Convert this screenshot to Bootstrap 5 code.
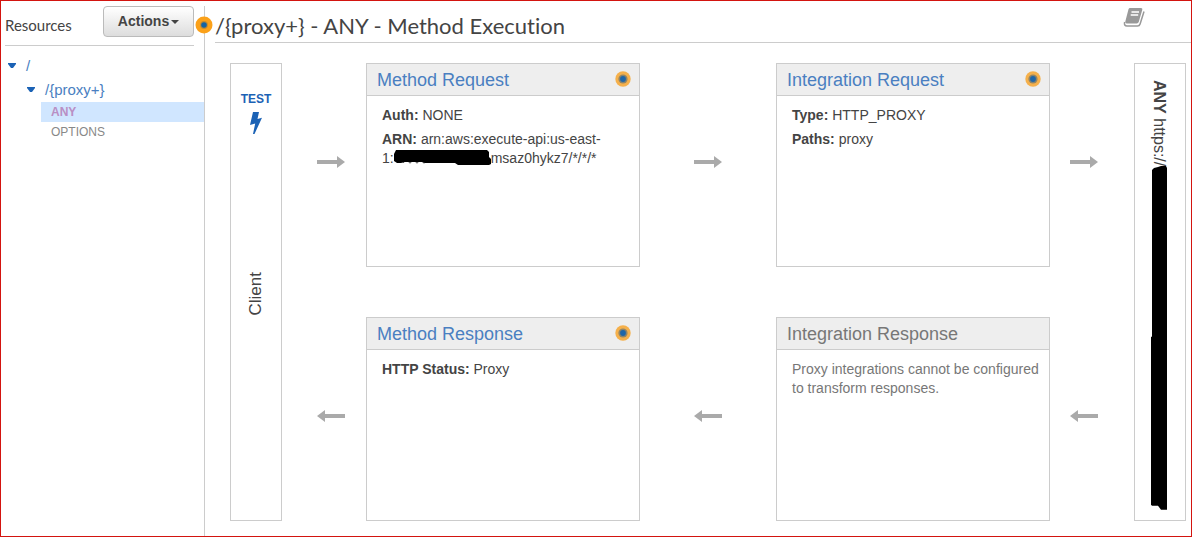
<!DOCTYPE html>
<html lang="en">
<head>
<meta charset="utf-8">
<meta name="viewport" content="width=device-width, initial-scale=1">
<title>Method Execution</title>
<link href="https://cdn.jsdelivr.net/npm/bootstrap@5.3.0/dist/css/bootstrap.min.css" rel="stylesheet">
<style>
  body { font-family: "Liberation Sans", Arial, sans-serif; font-size: 14px; line-height: 19px; color: #444; }
  a { text-decoration: none; color: #4a7fc1; }
  .app-frame { border: 1px solid #d3140f; }
  .resource-pane { width: 204px; flex: none; margin-top: 5px; border-right: 1px solid #ccc; padding-left: 4px; }
  .pane-head { height: 40px; margin-right: 10px; border-bottom: 1px solid #ccc; }
  .pane-title { font: 15px/20px Lato, sans-serif; margin: 9px 0 0; }
  .btn-actions { --bs-btn-padding-x: 14px; --bs-btn-padding-y: 5px; --bs-btn-font-size: 14px; --bs-btn-line-height: 19px;
    --bs-btn-border-radius: 4px; --bs-btn-font-weight: 700; --bs-btn-color: #444; --bs-btn-border-color: #bbb;
    height: 31px; width: 91px; padding-inline: 0; background: linear-gradient(#fff, #ddd); }
  .btn-actions::after { margin-left: 2px; vertical-align: 2px; border-width: 4px 4px 0; }
  .tree-link { font-size: 15px; line-height: 24px; }
  .tree-root { margin: 8px 0 0 2px; }
  .tree-child { margin-left: 21px; }
  .tree-child svg, .tree-root svg { width: 10px; height: 6px; margin-right: 9px; }
  .tree-method { display: block; margin-left: 36px; padding-left: 10px; font-size: 12px; line-height: 20px; color: #888; }
  .tree-method.chosen { background: #d0e6ff; color: #b98fc4; font-weight: 700; }
  .work-pane { padding-left: 10px; }
  .work-head { height: 42px; border-bottom: 1px solid #ccc; }
  .work-title { font: 22px/28px Lato, sans-serif; font-variant-ligatures: none; margin: 11px 0 0; }
  .help-button { margin: 6px 46px 0 0; }
  .flow-grid { display: grid; grid-template-columns: 52px 84fr 274fr 136fr 274fr 84fr 52px;
    grid-template-rows: 204px 204px; row-gap: 50px; padding: 20px 5px 15px 15px; }
  .end-box { grid-row: 1 / 3; border: 1px solid #ccc; }
  .client-box { grid-column: 1; padding-top: 26px; }
  .client-box a { font-size: 12px; font-weight: 700; color: #1b62b5; }
  .client-box svg { margin-top: 2px; }
  .upright { writing-mode: vertical-rl; font-size: 16px; line-height: 20px; white-space: nowrap; }
  .client-name { transform: rotate(180deg); font-size: 17px; line-height: 16px; margin-top: 137px; }
  .backend-box { grid-column: 7; padding: 16px 2px 10px 0; }
  .flow-card { --bs-card-border-radius: 0; --bs-card-inner-border-radius: 0; --bs-card-border-color: #ccc; color: #444; }
  .flow-card .card-header { height: 32px; padding: 0 8px 0 10px; background: #eee; border-color: #ccc; }
  .flow-card h2 { font-size: 18px; line-height: 32px; font-weight: 400; margin: 0; }
  .flow-card .card-header svg { margin-top: 7px; }
  .flow-card .card-body { padding: 10px 8px 0 15px; }
  .flow-card p { margin-bottom: 5px; }
  .muted-card, .muted-card h2 { color: #777; }
  .flow-arrow { width: 28px; height: 14px; fill: #aaa; margin-bottom: 6px; }
  .near-card { padding-left: 14px; }
  .near-end { padding-right: 16px; }
  .head-dot { position: absolute; left: -10px; top: 15px; }
</style>
</head>
<body>
<svg class="d-none">
  <symbol id="dot" viewBox="0 0 16 16"><circle cx="8" cy="8" r="7.7" fill="#f5b04b"/><circle cx="8" cy="8" r="4.6" fill="#8f8468"/><circle cx="8" cy="8" r="2.9" fill="#1f66a8"/></symbol>
  <symbol id="right" viewBox="0 0 28 14"><path d="M0 5h20V1l8 6-8 6V9H0z"/></symbol>
  <symbol id="left" viewBox="0 0 28 14"><path d="M28 5H8V1L0 7l8 6V9h20z"/></symbol>
  <symbol id="caret" viewBox="0 0 10 6"><path fill="#1b62b5" d="M1 0h8v1L6 5H4L1 1z"/></symbol>
</svg>
<div class="app-frame d-flex min-vh-100">
  <aside class="resource-pane">
    <div class="pane-head d-flex justify-content-between align-items-start">
      <h2 class="pane-title">Resources</h2>
      <button type="button" class="btn btn-actions dropdown-toggle">Actions</button>
    </div>
    <nav>
      <div class="tree-root d-flex align-items-center"><svg><use href="#caret"/></svg><a class="tree-link" href="#">/</a></div>
      <div class="tree-child d-flex align-items-center"><svg><use href="#caret"/></svg><a class="tree-link" href="#">/{proxy+}</a></div>
      <a class="tree-method chosen" href="#">ANY</a>
      <a class="tree-method" href="#">OPTIONS</a>
    </nav>
  </aside>
  <main class="work-pane flex-grow-1 position-relative">
    <svg class="head-dot" width="18" height="18" viewBox="0 0 18 18"><circle cx="9" cy="9" r="8.5" fill="#fba119"/><circle cx="9" cy="9" r="3.9" fill="#c18a32"/><circle cx="9" cy="9" r="2.8" fill="#1263a5"/></svg>
    <header class="work-head d-flex justify-content-between align-items-start">
      <h1 class="work-title">/{proxy+} - ANY - Method Execution</h1>
      <button type="button" class="help-button btn p-0 border-0 d-flex" aria-label="Documentation">
        <svg width="22" height="21" viewBox="0 0 22 21"><path fill="#999" d="M7 1h11q1.800 0 1.300 1.800l-3.500 12q-.4 1.700-2.200 1.700H3.800q-2 0-1.500-2L5.500 2.300Q6 1 7 1z"/><path fill="none" stroke="#fff" stroke-width="1.300" d="M8.500 5h7.500M7.700 8h7.500"/><path fill="none" stroke="#999" stroke-width="1.500" d="M1.600 15q-.8 4 2.400 4h10.500q2 0 2.600-2L21 4.500"/></svg>
      </button>
    </header>
    <div class="flow-grid">
      <section class="end-box client-box d-flex flex-column align-items-center">
        <a href="#" class="d-flex flex-column align-items-center">TEST
          <svg width="14" height="24" viewBox="0 0 14 24" fill="#1b62b5"><path d="M4 1h6L8.500 8 13 6.800 5.500 23 4 23l2.200-10.500L1 14z"/></svg>
        </a>
        <span class="upright client-name">Client</span>
      </section>
      <div class="near-card d-flex align-items-center justify-content-center"><svg class="flow-arrow"><use href="#right"/></svg></div>
      <article class="card flow-card">
        <div class="card-header d-flex justify-content-between"><h2><a href="#">Method Request</a></h2><svg width="16" height="16"><use href="#dot"/></svg></div>
        <div class="card-body"><p><b>Auth:</b> NONE</p><p><b>ARN:</b> arn:aws:execute-api:us-east-<br>1:<svg class="align-text-bottom" width="97" height="17" viewBox="1 0 97 17"><path d="M9 12q1 3 3 0m3 0q2 4 4 0m3 0q2 4 4 0m3 0q2 4 4 0" fill="none" stroke="#555"/><path d="M3 1h91l2 2v5l2 2v5l-2 1H65l-3-2H32l-3-1H12l-4 1H4l-3-2-1-5z"/></svg>msaz0hykz7/*/*/*</p></div>
      </article>
      <div class="d-flex align-items-center justify-content-center"><svg class="flow-arrow"><use href="#right"/></svg></div>
      <article class="card flow-card">
        <div class="card-header d-flex justify-content-between"><h2><a href="#">Integration Request</a></h2><svg width="16" height="16"><use href="#dot"/></svg></div>
        <div class="card-body"><p><b>Type:</b> HTTP_PROXY</p><p><b>Paths:</b> proxy</p></div>
      </article>
      <div class="near-end d-flex align-items-center justify-content-center"><svg class="flow-arrow"><use href="#right"/></svg></div>
      <section class="end-box backend-box d-flex flex-column align-items-center">
        <span class="upright"><b>ANY</b> https://</span>
        <svg class="flex-grow-1" width="16" height="100" viewBox="0 0 16 342" preserveAspectRatio="none"><path d="M3 2l4-1 3-1h5l1 2v340h-6l-3-4H1l-1-1V170h1V4z"/></svg>
      </section>
      <div class="near-card d-flex align-items-center justify-content-center"><svg class="flow-arrow"><use href="#left"/></svg></div>
      <article class="card flow-card">
        <div class="card-header d-flex justify-content-between"><h2><a href="#">Method Response</a></h2><svg width="16" height="16"><use href="#dot"/></svg></div>
        <div class="card-body"><p><b>HTTP Status:</b> Proxy</p></div>
      </article>
      <div class="d-flex align-items-center justify-content-center"><svg class="flow-arrow"><use href="#left"/></svg></div>
      <article class="card flow-card muted-card">
        <div class="card-header"><h2>Integration Response</h2></div>
        <div class="card-body"><p>Proxy integrations cannot be configured to transform responses.</p></div>
      </article>
      <div class="near-end d-flex align-items-center justify-content-center"><svg class="flow-arrow"><use href="#left"/></svg></div>
    </div>
  </main>
</div>
<script src="https://cdn.jsdelivr.net/npm/bootstrap@5.3.0/dist/js/bootstrap.bundle.min.js"></script>
</body>
</html>
